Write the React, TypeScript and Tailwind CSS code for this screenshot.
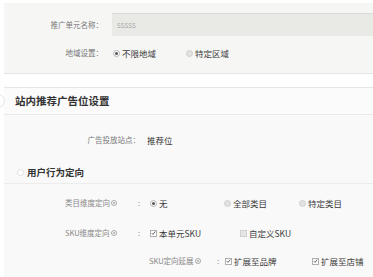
import React from 'react'

const font = { fontFamily: '"Noto Sans CJK SC", "Noto Sans", sans-serif' }

const Radio = ({ checked }: { checked?: boolean }) => (
    <span
        className={`inline-flex items-center justify-center w-[7px] h-[7px] rounded-full border ${checked ? 'border-[#b5b5b5] bg-white' : 'border-[#d0d0d0] bg-[#e2e2e2]'}`}
    >
        {checked && <span className="w-[3px] h-[3px] rounded-full bg-[#555]" />}
    </span>
)

const Check = ({ checked }: { checked?: boolean }) => (
    <span
        className={`inline-flex items-center justify-center w-[7px] h-[7px] border ${checked ? 'border-[#b0b0b0] bg-white' : 'border-[#cfcfcf] bg-[#e6e6e6]'}`}
    >
        {checked && (
            <svg viewBox="0 0 8 8" className="w-[6px] h-[6px]">
                <path d="M1.2 4.2 L3.2 6.2 L6.8 1.6" fill="none" stroke="#444" strokeWidth="1.3" />
            </svg>
        )}
    </span>
)

const Help = () => (
    <span className="inline-flex items-center justify-center w-[6px] h-[6px] ml-[1px] rounded-full border border-[#aaa]">
        <span className="w-[2px] h-[2px] rounded-full bg-[#aaa]" />
    </span>
)

const Option = ({ w, children, radio, checked }: { w: string; children: React.ReactNode; radio?: boolean; checked?: boolean }) => (
    <div className={`flex items-center gap-[2px] ${w}`}>
        {radio ? <Radio checked={checked} /> : <Check checked={checked} />}
        <span className="text-[8.5px] text-[#3a3a3a]">{children}</span>
    </div>
)

export default function App() {
    return (
        <div className="relative w-[373px] h-[277px] overflow-hidden bg-white flex flex-col" style={font}>
            {/* 推广单元 */}
            <div className="ml-[4px] mt-[3px] h-[71px] bg-[#f6f6f5] border-b border-[#e5e5e5] pt-[10px]">
                <div className="flex items-center h-[23px]">
                    <span className="w-[99px] text-right text-[7.5px] text-[#777]">推广单元名称：</span>
                    <div className="ml-[9px] flex-1 h-[23px] bg-[#e9e9e6] border-t border-[#dadada] flex items-center pl-[5px] text-[8px] text-[#aaa]">
                        sssss
                    </div>
                </div>
                <div className="flex items-center h-[16px] mt-[9px]">
                    <span className="w-[99px] text-right text-[7.5px] text-[#777]">地域设置：</span>
                    <div className="ml-[10px] flex items-center">
                        <Option w="w-[73px]" radio checked>不限地域</Option>
                        <Option w="w-[60px]" radio>特定区域</Option>
                    </div>
                </div>
            </div>

            {/* 站内推荐广告位设置 */}
            <div className="ml-[4px] mt-[13px] h-[28px] border-t border-[#e6e6e6] border-b border-b-[#efe8e8] bg-[#fbfbfb] flex items-center pl-[11px]">
                <span className="text-[10.5px] font-bold text-[#333]">站内推荐广告位设置</span>
            </div>
            <span className="absolute left-[-9px] top-[94px] w-[14px] h-[14px] rounded-full border border-[#e2e2e2] bg-white" />

            <div className="ml-[4px] flex-1 bg-[#f9f9f9] pt-[17px]">
                <div className="flex items-center h-[16px]">
                    <span className="w-[136px] text-right text-[7.5px] text-[#777]">广告投放站点：</span>
                    <span className="ml-[7px] text-[8.5px] text-[#333]">推荐位</span>
                </div>

                <div className="mt-[16px] h-[20px] pb-[3px] border-b border-[#ececec] flex items-center pl-[13px] gap-[3px]">
                    <span className="w-[7px] h-[7px] rounded-full border border-[#e0e0e0] bg-white" />
                    <span className="text-[9.5px] font-bold text-[#333]">用户行为定向</span>
                </div>

                <div className="mt-[11px] flex items-center h-[16px] pl-[61px]">
                    <span className="w-[73px] flex items-center text-[7.5px] text-[#888]">
                        类目维度定向<Help />
                    </span>
                    <span className="w-[12px] text-[7.5px] text-[#888]">:</span>
                    <Option w="w-[74px]" radio checked>无</Option>
                    <Option w="w-[75px]" radio>全部类目</Option>
                    <Option w="w-[60px]" radio>特定类目</Option>
                </div>

                <div className="mt-[14px] flex items-center h-[16px] pl-[61px]">
                    <span className="w-[73px] flex items-center text-[7.5px] text-[#888]">
                        SKU维度定向<Help />
                    </span>
                    <span className="w-[12px] text-[7.5px] text-[#888]">:</span>
                    <Option w="w-[90px]" checked>本单元SKU</Option>
                    <Option w="w-[70px]">自定义SKU</Option>
                </div>

                <div className="mt-[12px] flex items-center h-[16px] pl-[145px]">
                    <span className="w-[68px] flex items-center text-[7.5px] text-[#888]">
                        SKU定向延展<Help />
                    </span>
                    <span className="w-[8px] text-[7.5px] text-[#888]">:</span>
                    <Option w="w-[87px]" checked>扩展至品牌</Option>
                    <Option w="w-[60px]" checked>扩展至店铺</Option>
                </div>
            </div>
        </div>
    )
}
